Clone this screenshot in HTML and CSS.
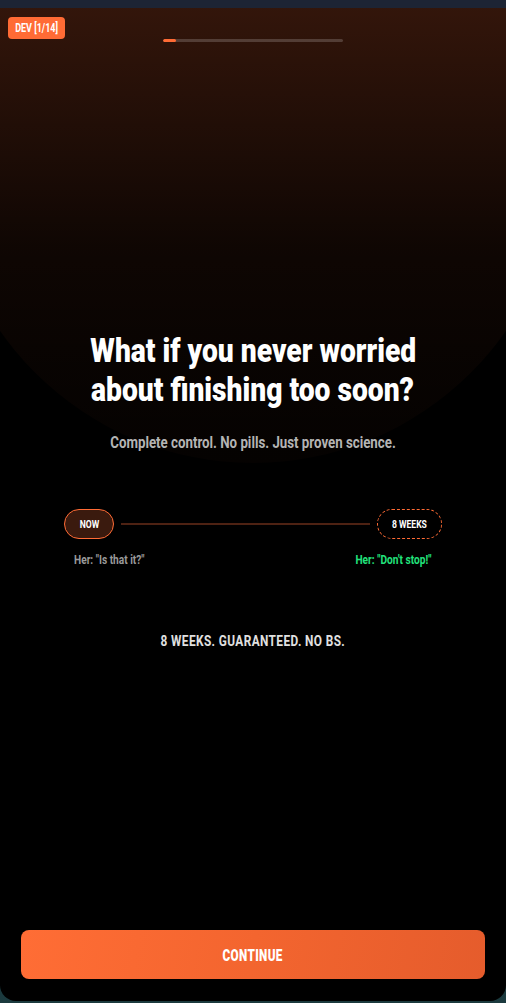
FILE: index.html
```html
<!DOCTYPE html>
<html lang="en">
<head>
<meta charset="utf-8">
<title>Onboarding</title>
<link rel="stylesheet" href="styles.css">
</head>
<body>
<div class="screen">
  <div class="dev-badge"><span class="cond">DEV [1/14]</span></div>
  <div class="progress"><div class="progress-fill" style="width:7.14%"></div></div>
  <main class="hero">
    <h1 class="title"><span class="cond">What if you never worried</span><br><span class="cond">about finishing too soon?</span></h1>
    <p class="subtitle"><span class="cond">Complete control. No pills. Just proven science.</span></p>
    <div class="timeline">
      <div class="track">
        <span class="pill pill-now"><span class="cond">NOW</span></span>
        <span class="line"></span>
        <span class="pill pill-goal"><span class="cond">8 WEEKS</span></span>
      </div>
      <div class="labels">
        <span class="label label-now"><span class="cond">Her: "Is that it?"</span></span>
        <span class="label label-goal"><span class="cond">Her: "Don't stop!"</span></span>
      </div>
    </div>
    <p class="tagline"><span class="cond">8 WEEKS. GUARANTEED. NO BS.</span></p>
  </main>
  <button class="continue"><span class="cond">CONTINUE</span></button>
</div>
</body>
</html>
```

FILE: styles.css
```css
* { box-sizing: border-box; }
html, body { margin: 0; padding: 0; }
body {
  width: 506px;
  height: 1003px;
  overflow: hidden;
  background: linear-gradient(180deg, #1d2434 0%, #1a2432 60%, #1b3a3e 100%);
  font-family: Roboto, "Liberation Sans", sans-serif;
  color: #fff;
}
.cond {
  display: inline-block;
  white-space: nowrap;
  transform: scaleX(var(--sx, 0.8));
  transform-origin: center;
}
.screen {
  position: relative;
  margin-top: 8px;
  height: 993px;
  background: #000;
  border-radius: 0 0 16px 16px;
  overflow: hidden;
  display: flex;
  flex-direction: column;
  align-items: center;
}
.screen::before {
  content: "";
  position: absolute;
  left: -55px;
  top: -161px;
  width: 616px;
  height: 616px;
  border-radius: 50%;
  background: linear-gradient(180deg, rgba(255,107,53,0.30) 0%, rgba(255,107,53,0.20) 26%, rgba(255,107,53,0.06) 65%, rgba(255,107,53,0.03) 85%, rgba(255,107,53,0.02) 100%);
  pointer-events: none;
}
.dev-badge {
  position: absolute;
  left: 8px;
  top: 9px;
  width: 57px;
  height: 22px;
  background: #ff6b35;
  border-radius: 4px;
  font-size: 12px;
  font-weight: 700;
  line-height: 22px;
  text-align: center;
  color: #fff;
  z-index: 2;
  --sx: 0.75;
}
.progress {
  position: relative;
  margin-top: 31px;
  width: 180px;
  height: 3px;
  border-radius: 2px;
  background: rgba(255,255,255,0.18);
  overflow: hidden;
}
.progress-fill {
  height: 100%;
  background: #ff6b35;
  border-radius: 2px;
}
.hero {
  position: relative;
  display: flex;
  flex-direction: column;
  align-items: center;
  width: 100%;
}
.title {
  margin: 289px 0 0;
  font-size: 34px;
  line-height: 39px;
  font-weight: 900;
  text-align: center;
  color: #fff;
  --sx: 0.83;
}
.subtitle {
  margin: 24px 0 0;
  font-size: 16px;
  line-height: 20px;
  font-weight: 700;
  color: #b4b4b4;
  --sx: 0.83;
}
.timeline {
  margin-top: 56px;
  width: 378px;
}
.track {
  display: flex;
  align-items: center;
  gap: 7px;
}
.pill {
  display: inline-flex;
  align-items: center;
  justify-content: center;
  height: 30px;
  border-radius: 15px;
  font-size: 11px;
  font-weight: 700;
  color: #fff;
  flex: none;
  --sx: 0.78;
}
.pill-now {
  width: 50px;
  background: #3a1a0e;
  border: 1px solid #ff6b35;
}
.pill-goal {
  width: 65px;
  background: #000;
  border: 1px dashed #ff6b35;
}
.line {
  flex: 1;
  height: 2px;
  background: #4e2213;
}
.labels {
  display: flex;
  justify-content: space-between;
  padding: 0 11px 0 10px;
  margin-top: 13px;
}
.label {
  font-size: 13px;
  line-height: 16px;
  font-weight: 700;
  --sx: 0.78;
}
.label-now { color: #9a9a9a; }
.label-now .cond { transform-origin: left center; }
.label-goal { color: #22e37c; }
.label-goal .cond { transform-origin: right center; }
.tagline {
  margin: 64px 0 0;
  font-size: 15px;
  line-height: 18px;
  font-weight: 700;
  letter-spacing: 0.5px;
  color: #e0e0e0;
  --sx: 0.79;
}
.continue {
  position: relative;
  margin: auto 21px 22px;
  width: 464px;
  height: 49px;
  border: 0;
  border-radius: 8px;
  background: linear-gradient(100deg, #ff6d35 0%, #f3652f 50%, #e55c2c 100%);
  font-family: inherit;
  font-size: 17px;
  font-weight: 900;
  letter-spacing: 0.5px;
  color: #fff;
  --sx: 0.69;
}
```
